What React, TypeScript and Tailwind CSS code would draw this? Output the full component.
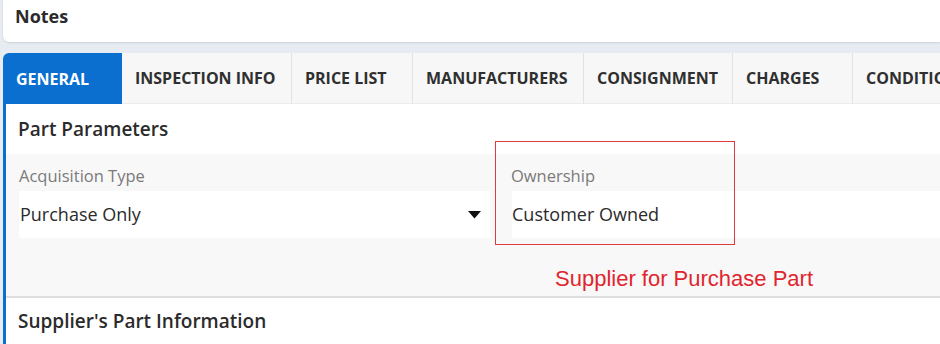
const tabs = [
  { label: "GENERAL", w: "w-[119px]", active: true },
  { label: "INSPECTION INFO", w: "w-[170px]" },
  { label: "PRICE LIST", w: "w-[121px]" },
  { label: "MANUFACTURERS", w: "w-[171px]" },
  { label: "CONSIGNMENT", w: "w-[149px]" },
  { label: "CHARGES", w: "w-[120px]" },
  { label: "CONDITIONS", w: "w-[140px]" },
];

export default function App() {
  return (
    <div className="relative w-[940px] h-[344px] overflow-hidden bg-[#e7ecf3] pl-[3px] font-['Open_Sans',sans-serif] text-[#2b2b2b]">
      {/* notes card */}
      <div className="h-[42px] bg-white rounded-bl-md shadow-[0_1px_2px_rgba(0,0,0,0.12)] pl-[12px] pt-[4px]">
        <span className="text-[18px] font-bold leading-[24px]">Notes</span>
      </div>

      {/* tab strip */}
      <div className="mt-[11px] flex h-[51px] overflow-hidden">
        {tabs.map((t) => (
          <div
            key={t.label}
            className={
              t.active
                ? `${t.w} shrink-0 flex items-center pl-[13px] bg-[#0b6fd0] text-white rounded-tl-md text-[16px] font-bold whitespace-nowrap`
                : `${t.w} shrink-0 flex items-center pl-[13px] bg-[#f7f7f7] border-r border-[#e2e2e2] border-b border-b-[#ececec] text-[16px] font-bold text-[#2f2f2f] whitespace-nowrap`
            }
          >
            {t.label}
          </div>
        ))}
      </div>

      {/* content */}
      <div className="border-l-[3px] border-[#0b6fd0] bg-white h-[240px]">
        <div className="h-[50px] flex items-center pl-[12px]">
          <span className="text-[19px] font-semibold">Part Parameters</span>
        </div>

        <div className="bg-[#f8f8f8] border-b-2 border-[#dedede] h-[144px] pt-[11px] pl-[13px] flex gap-[22px]">
          <div className="w-[471px] shrink-0">
            <div className="text-[16.5px] text-[#7a7a7a] leading-[22px]">Acquisition Type</div>
            <div className="mt-[4px] h-[47px] bg-white flex items-center justify-between pl-[1px] pr-[9px]">
              <span className="text-[18px] text-[#2b2b2b]">Purchase Only</span>
              <svg width="13" height="8" viewBox="0 0 13 8">
                <path d="M0 0H13L6.5 7.5Z" fill="#111" />
              </svg>
            </div>
          </div>
          <div className="flex-1">
            <div className="text-[16.5px] text-[#7a7a7a] leading-[22px] -ml-[1px]">Ownership</div>
            <div className="mt-[4px] h-[47px] bg-white flex items-center">
              <span className="text-[18px] text-[#2b2b2b]">Customer Owned</span>
            </div>
            <div className="mt-[28px] pl-[43px] font-['Liberation_Sans',Arial,sans-serif] text-[22px] leading-[26px] text-[#e0252e]">
              Supplier for Purchase Part
            </div>
          </div>
        </div>

        <div className="h-[46px] flex items-center pl-[12px]">
          <span className="text-[19px] font-semibold">Supplier's Part Information</span>
        </div>
      </div>

      {/* annotation box */}
      <div className="absolute left-[495px] top-[141px] w-[240px] h-[104px] border-[1.5px] border-[#de3a40]" />
    </div>
  );
}
